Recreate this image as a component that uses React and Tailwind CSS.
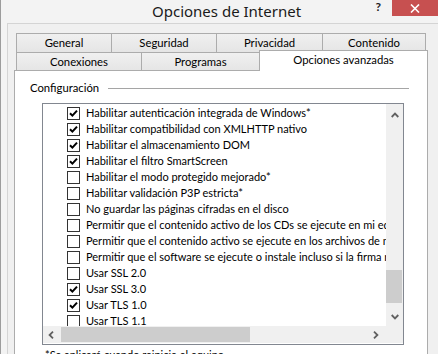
import React from "react";

const items = [
  ["Habilitar autenticación integrada de Windows*", true],
  ["Habilitar compatibilidad con XMLHTTP nativo", true],
  ["Habilitar el almacenamiento DOM", true],
  ["Habilitar el filtro SmartScreen", true],
  ["Habilitar el modo protegido mejorado*", false],
  ["Habilitar validación P3P estricta*", false],
  ["No guardar las páginas cifradas en el disco", false],
  ["Permitir que el contenido activo de los CDs se ejecute en mi equipo*", false],
  ["Permitir que el contenido activo se ejecute en los archivos de mi equipo*", false],
  ["Permitir que el software se ejecute o instale incluso si la firma no es válida", false],
  ["Usar SSL 2.0", false],
  ["Usar SSL 3.0", true],
  ["Usar TLS 1.0", true],
  ["Usar TLS 1.1", false],
  ["Usar TLS 1.2", false],
];

function Check({ checked }) {
  return (
    <svg width="13" height="13" viewBox="0 0 13 13" className="shrink-0 block">
      <rect x="0.5" y="0.5" width="12" height="12" fill="#ffffff" stroke="#333333" />
      {checked && (
        <path d="M3 6.2 L5.4 8.6 L10 3.6" fill="none" stroke="#000000" strokeWidth="2" />
      )}
    </svg>
  );
}

function Tab({ w, children, cls = "" }) {
  return (
    <div
      className={`h-[19px] border-t border-l border-r border-[#acacac] bg-gradient-to-b from-[#f0f0f0] to-[#e5e5e5] flex items-center justify-center text-[11.3px] text-[#000] ${cls}`}
      style={{ width: w }}
    >
      {children}
    </div>
  );
}

export default function App() {
  return (
    <div
      className="w-[438px] h-[354px] overflow-hidden bg-[#f3f3f3] border-l border-[#9c9c9c] flex flex-col text-black"
      style={{ fontFamily: 'Lato, "Noto Sans", sans-serif' }}
    >
      {/* title bar */}
      <div className="h-[23px] flex items-start shrink-0">
        <div
          className="ml-[151px] mt-[1px] text-[15px] leading-[20px] text-[#1a1a1a]"
          style={{ fontFamily: '"Noto Sans", sans-serif' }}
        >
          Opciones de Internet
        </div>
        <div className="flex-1" />
        <div className="mt-[1px] text-[12px] font-bold leading-[12px] text-[#222] mr-[11px]">?</div>
        <div className="w-[46px] h-[16px] bg-[#c75050] flex items-center justify-center">
          <svg width="10" height="9" viewBox="0 0 10 9">
            <path d="M1 0.5 L9 8.5 M9 0.5 L1 8.5" stroke="#ffffff" strokeWidth="1.6" fill="none" />
          </svg>
        </div>
      </div>

      {/* client area */}
      <div className="ml-[6px] flex-1 bg-[#f0f0f0] border-t border-l border-[#d4d4d4] pl-[6px] pt-[9px] flex flex-col">
        {/* tab row 1 */}
        <div className="flex ml-[2px]">
          <Tab w={96}>General</Tab>
          <Tab w={106} cls="-ml-px">Seguridad</Tab>
          <Tab w={107} cls="-ml-px">Privacidad</Tab>
          <Tab w={104} cls="-ml-px">Contenido</Tab>
        </div>
        {/* tab row 2 */}
        <div className="flex ml-[2px] h-[18px] items-start">
          <Tab w={126} cls="h-[18px]">Conexiones</Tab>
          <Tab w={119} cls="-ml-px h-[18px]">Programas</Tab>
          <div className="-ml-px -mt-[2px] w-[169px] h-[21px] relative z-10 bg-white border-t border-l border-r border-[#acacac] flex justify-center pt-[1px] text-[11.3px] leading-[16px]">
            Opciones avanzadas
          </div>
        </div>

        {/* tab panel */}
        <div className="w-[414px] flex-1 bg-white border-t border-l border-r border-[#acacac] pt-[9px] pl-[15px]">
          <div className="flex items-center h-[16px]">
            <span className="text-[11.3px] leading-[16px]">Configuración</span>
            <div className="flex-1 h-px bg-[#a5a5a5] ml-[9px] mr-[18px]" />
          </div>

          {/* list box */}
          <div className="mt-[7px] ml-[12px] w-[362px] h-[242px] border border-[#828790] flex flex-col">
            <div className="flex h-[222px]">
              <div className="flex-1 overflow-hidden pt-[1px] bg-white">
                {items.map(([label, checked]) => (
                  <div key={label} className="h-[16px] flex items-center pl-[24px] gap-[6px] whitespace-nowrap">
                    <Check checked={checked} />
                    <span className="text-[11px] leading-[16px]">{label}</span>
                  </div>
                ))}
              </div>
              {/* vertical scrollbar */}
              <div className="w-[17px] bg-[#f0f0f0] flex flex-col">
                <div className="h-[20px] flex justify-center pt-[8px]">
                  <svg width="8" height="6" viewBox="0 0 8 6" className="block">
                    <path d="M0.7 5 L4 1.6 L7.3 5" stroke="#606060" strokeWidth="1.8" fill="none" />
                  </svg>
                </div>
                <div className="h-[146px]" />
                <div className="h-[33px] w-[16px] bg-[#cdcdcd]" />
                <div className="h-[11px]" />
                <div className="h-[7px] flex justify-center">
                  <svg width="8" height="6" viewBox="0 0 8 6" className="block">
                    <path d="M0.7 1 L4 4.4 L7.3 1" stroke="#606060" strokeWidth="1.8" fill="none" />
                  </svg>
                </div>
              </div>
            </div>
            {/* horizontal scrollbar */}
            <div className="flex h-[17px]">
              <div className="flex-1 bg-[#f0f0f0] flex items-start">
                <div className="w-[18px] h-full flex items-center pl-[5px]">
                  <svg width="6" height="8" viewBox="0 0 6 8" className="block">
                    <path d="M5 0.7 L1.6 4 L5 7.3" stroke="#606060" strokeWidth="1.8" fill="none" />
                  </svg>
                </div>
                <div className="mt-[1px] w-[189px] h-[15px] bg-[#cdcdcd]" />
                <div className="flex-1" />
                <div className="w-[13px] h-full flex items-center">
                  <svg width="6" height="8" viewBox="0 0 6 8" className="block">
                    <path d="M1 0.7 L4.4 4 L1 7.3" stroke="#606060" strokeWidth="1.8" fill="none" />
                  </svg>
                </div>
              </div>
              <div className="w-[17px] bg-[#f0f0f0]" />
            </div>
          </div>

          <div className="mt-[2px] ml-[15px] text-[11px] leading-[16px] whitespace-nowrap">
            *Se aplicará cuando reinicie el equipo
          </div>
        </div>
      </div>
    </div>
  );
}
